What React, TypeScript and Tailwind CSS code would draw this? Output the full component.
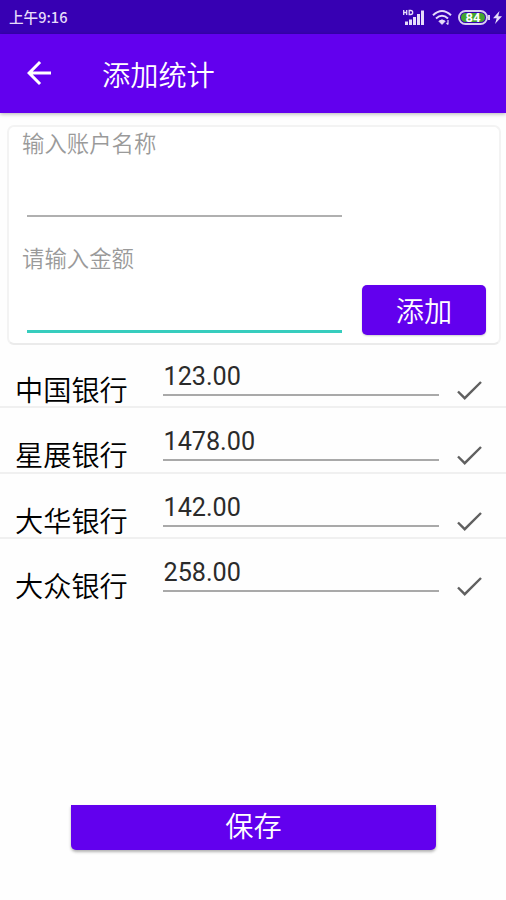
import React from "react";

const accounts = [
  { name: "中国银行", amount: "123.00" },
  { name: "星展银行", amount: "1478.00" },
  { name: "大华银行", amount: "142.00" },
  { name: "大众银行", amount: "258.00" },
];

const StatusBar = () => (
  <div className="h-[34px] shrink-0 bg-[#3700b3] text-[#e6dcfa] flex items-center justify-between pl-[9px] pr-1">
    <span className="text-[14.6px] leading-none font-medium">上午9:16</span>
    <div className="flex items-center">
      {/* Signal */}
      <svg width="22" height="17" viewBox="0 0 22 17" fill="currentColor">
        <path d="M0.7 1v5M3.7 1v5M0.7 3.5h3M6.2 1.5h1.5q2 0 2 2t-2 2H6.2z" fill="none" stroke="currentColor" strokeWidth="1.3" />
        <rect x="2" y="12.5" width="3" height="3.5" />
        <rect x="6" y="10.5" width="3" height="5.5" />
        <rect x="10" y="8" width="3" height="8" />
        <rect x="14" y="5" width="3" height="11" />
        <rect x="18" y="1.5" width="3" height="14.5" />
      </svg>
      {/* Wifi */}
      <svg className="ml-[7px]" width="20" height="17" viewBox="0 0 20 17" fill="none" stroke="currentColor" strokeWidth="2">
        <path d="M1 6.2Q10 -2.2 19 6.2M4 9.4Q10 4 16 9.4" />
        <path d="M6.8 12.2Q10 9.5 13.2 12.2L10 15.4z" fill="currentColor" strokeWidth="0.8" />
        <path d="M16 11v4.5M14.5 14l1.5 1.5" strokeWidth="1.2" />
      </svg>
      {/* Battery */}
      <div className="ml-[6px] w-[30px] h-[15px] rounded-full border-2 border-[#d9cff2] p-px flex">
        <div className="flex-1 rounded-full bg-[#43a52f] flex items-center justify-center font-['Roboto',sans-serif] text-[13px] leading-none font-bold text-white">
          84
        </div>
      </div>
      <div className="w-[2px] h-[5px] bg-[#d9cff2]" />
      <svg className="ml-[3px]" width="9" height="13" viewBox="0 0 9 13" fill="currentColor">
        <path d="M6.5 0L0 7.3h3.7L2 13l7-7.7H5.2z" />
      </svg>
    </div>
  </div>
);

const AppBar = () => (
  <header className="h-[79px] shrink-0 bg-[#6200ee] text-white flex items-center pl-[27px] shadow-[0_1px_4px_rgba(0,0,0,0.3)]">
    <svg className="-mt-px" width="24" height="24" viewBox="4 4 16 16" fill="currentColor">
      <path d="M20 11H7.83l5.59-5.59L12 4l-8 8 8 8 1.41-1.41L7.83 13H20v-2z" />
    </svg>
    <h1 className="ml-[51px] mt-[2px] text-[28.2px] leading-none font-[350]">添加统计</h1>
  </header>
);

const AccountRow = ({ name, amount, last }: { name: string; amount: string; last: boolean }) => (
  <li className={`h-[65.25px] flex pl-[15px] ${last ? "" : "border-b-2 border-[#f0f0f0]"}`}>
    <span className="w-[148px] pt-[32px] text-[28.2px] leading-[28px] font-[350] text-black">{name}</span>
    <div className="w-[276px] h-[53px] border-b-2 border-[#a9a9a9] pt-[19px] pl-[0.5px] font-['Roboto',sans-serif] text-[25.2px] leading-[30px] text-[#2b2b2b]">
      {amount}
    </div>
    <svg className="ml-[18px] mt-[38px]" width="25" height="19" viewBox="0 0 25 19" fill="none" stroke="#606060" strokeWidth="2.4">
      <path d="M1 10.5L7.7 17.2L24 1" />
    </svg>
  </li>
);

const App = () => {
  return (
    <div className="w-full h-[900px] bg-[#fefefe] flex flex-col overflow-hidden font-['Noto_Sans_CJK_SC',sans-serif]">
      <StatusBar />
      <AppBar />

      {/* New account form */}
      <section className="ml-[7px] mr-[5px] mt-[12px] h-[220px] shrink-0 rounded-[7px] border-2 border-[#f3f3f3] border-b-[#ebebeb] bg-white flex">
        <div className="w-[333px] pl-[13px]">
          <label className="block mt-[4px] text-[22.4px] leading-[22px] font-[350] text-[#9a9a9a]">输入账户名称</label>
          <div className="ml-[5px] h-[64px] w-[315px] border-b-2 border-[#b0b0b0]" />
          <label className="block mt-[29px] text-[22.4px] leading-[22px] font-[350] text-[#9a9a9a]">请输入金额</label>
          <div className="ml-[5px] h-[65px] w-[315px] border-b-3 border-[#37cdbe]" />
        </div>
        <button className="ml-[20px] mb-[8px] self-end w-[124px] h-[50px] rounded-[5px] bg-[#6200ee] text-white text-[28.2px] leading-none font-[350] shadow-[0_1px_2px_rgba(0,0,0,0.2)]">
          添加
        </button>
      </section>

      <ul className="-mt-[2px] shrink-0">
        {accounts.map((account, i) => (
          <AccountRow key={account.name} {...account} last={i === accounts.length - 1} />
        ))}
      </ul>

      <button className="mt-auto mb-[50px] ml-[71px] w-[365px] h-[45px] shrink-0 rounded-b-[5px] bg-[#6200ee] text-white text-[28.2px] leading-none font-[350] pb-[5px] shadow-[0_2px_3px_rgba(0,0,0,0.3)]">
        保存
      </button>
    </div>
  );
};

export default App;
